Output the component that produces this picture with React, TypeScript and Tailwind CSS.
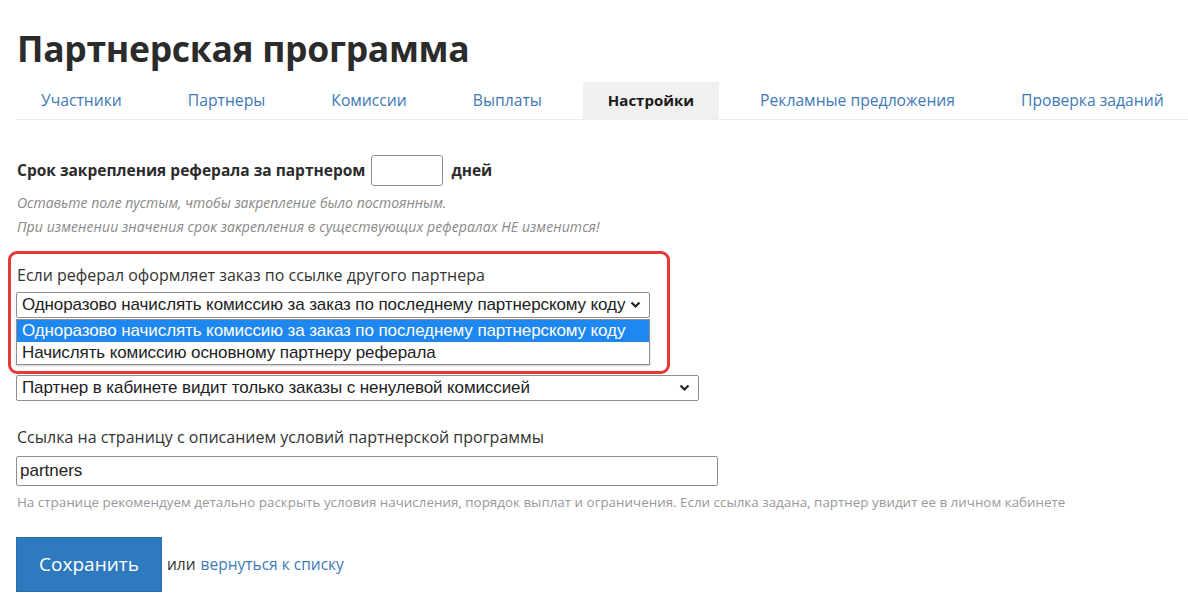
import React from 'react';

const tabs = [
  'Участники',
  'Партнеры',
  'Комиссии',
  'Выплаты',
  'Настройки',
  'Рекламные предложения',
  'Проверка заданий',
];

const Chevron = () => (
  <svg width="11" height="8" viewBox="0 0 11 8" className="shrink-0">
    <path d="M1.5 1.5 L5.5 5.5 L9.5 1.5" fill="none" stroke="#222" strokeWidth="2.2" />
  </svg>
);

const FakeSelect = ({ value, width }: { value: string; width: string }) => (
  <div
    className={`${width} h-[26px] flex items-center justify-between pl-[5px] pr-[8px] border border-[#8f8f8f] rounded-[2px] bg-white text-[17px] text-[#222]`}
    style={{ fontFamily: '"Liberation Sans", Arial, sans-serif' }}
  >
    <span className="whitespace-nowrap tracking-[-0.1px]">{value}</span>
    <Chevron />
  </div>
);

const App: React.FC = () => {
  return (
    <div
      className="w-[1188px] h-[612px] bg-white text-[#333] overflow-hidden"
      style={{ fontFamily: '"Open Sans", "Noto Sans", sans-serif' }}
    >
      <h1 className="pl-[17px] pt-[26px] text-[35.5px] leading-[44px] font-bold text-[#2b2b2b] tracking-[-0.3px]">
        Партнерская программа
      </h1>

      <div className="ml-[16px] mt-[12px] flex gap-[16px] border-b border-[#ececec]">
        {tabs.map((t) => (
          <div
            key={t}
            className={`h-[37px] px-[25px] flex items-center whitespace-nowrap ${
              t === 'Настройки' ? 'bg-[#f0f0f0] font-bold text-[15px] text-[#1a1a1a]' : 'text-[15.7px] text-[#3d79b8]'
            }`}
          >
            {t}
          </div>
        ))}
      </div>

      <div className="pl-[17px] pt-[35px]">
        <div className="flex items-center gap-[6px] text-[15.5px] font-bold text-[#2b2b2b]">
          <span>Срок закрепления реферала за партнером</span>
          <div className="w-[72px] h-[31px] border border-[#8f8f8f] rounded-[3px] bg-white" />
          <span className="ml-[2px]">дней</span>
        </div>
        <p className="mt-[5px] text-[14px] italic text-[#888] leading-[24px]">
          Оставьте поле пустым, чтобы закрепление было постоянным.
        </p>
        <p className="text-[14px] tracking-[0.1px] italic text-[#888] leading-[24px]">
          При изменении значения срок закрепления в существующих рефералах НЕ изменится!
        </p>

        <div className="relative mt-[26px]">
          <div className="absolute left-[-9px] top-[-14px] w-[662px] h-[123px] border-[3px] border-[#e53935] rounded-[9px] pointer-events-none z-20" />
          <p className="text-[16px] leading-[20px] text-[#333]">Если реферал оформляет заказ по ссылке другого партнера</p>
          <div className="relative mt-[7px] ml-[-1px] z-10">
            <FakeSelect value="Одноразово начислять комиссию за заказ по последнему партнерскому коду" width="w-[634px]" />
            <div
              className="absolute left-0 top-[27px] w-[634px] border border-[#8f8f8f] bg-white text-[17px] shadow-[0_1px_2px_rgba(0,0,0,0.2)]"
              style={{ fontFamily: '"Liberation Sans", Arial, sans-serif' }}
            >
              <div className="h-[22px] pl-[5px] flex items-center bg-[#1e88f0] text-white whitespace-nowrap tracking-[-0.1px]">
                Одноразово начислять комиссию за заказ по последнему партнерскому коду
              </div>
              <div className="h-[22px] pl-[5px] flex items-center text-[#222] whitespace-nowrap tracking-[-0.1px]">
                Начислять комиссию основному партнеру реферала
              </div>
            </div>
          </div>
          <div className="mt-[57px] ml-[-1px]">
            <FakeSelect value="Партнер в кабинете видит только заказы с ненулевой комиссией" width="w-[683px]" />
          </div>
        </div>

        <p className="mt-[26px] text-[16px] leading-[20px] text-[#333]">
          Ссылка на страницу с описанием условий партнерской программы
        </p>
        <div
          className="mt-[9px] ml-[-1px] w-[702px] h-[30px] border border-[#8f8f8f] rounded-[2px] flex items-center pl-[3px] text-[17px] text-[#222]"
          style={{ fontFamily: '"Liberation Sans", Arial, sans-serif' }}
        >
          partners
        </div>
        <p className="mt-[6px] text-[13.4px] text-[#999] leading-[20px]">
          На странице рекомендуем детально раскрыть условия начисления, порядок выплат и ограничения. Если ссылка задана, партнер увидит ее в личном кабинете
        </p>

        <div className="mt-[25px] flex items-center">
          <button className="ml-[-1px] w-[146px] h-[55px] bg-[#2f7abf] border border-[#2a6ea9] text-white text-[19px]">
            Сохранить
          </button>
          <span className="ml-[5px] text-[15.5px] text-[#333]">или</span>
          <a className="ml-[5px] text-[15.5px] text-[#3d79b8]" href="#">вернуться к списку</a>
        </div>
      </div>
    </div>
  );
};

export default App;
